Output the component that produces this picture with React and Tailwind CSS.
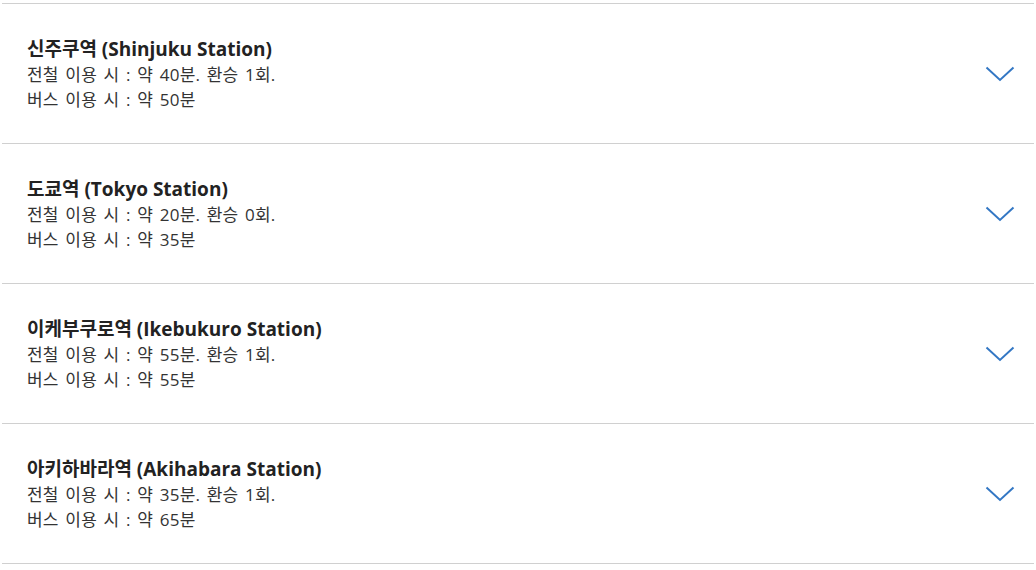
const stations = [
  { ko: '신주쿠역', en: 'Shinjuku Station', train: '약 40분. 환승 1회.', bus: '약 50분' },
  { ko: '도쿄역', en: 'Tokyo Station', train: '약 20분. 환승 0회.', bus: '약 35분' },
  { ko: '이케부쿠로역', en: 'Ikebukuro Station', train: '약 55분. 환승 1회.', bus: '약 55분' },
  { ko: '아키하바라역', en: 'Akihabara Station', train: '약 35분. 환승 1회.', bus: '약 65분' },
];

function Chevron() {
  return (
    <svg width="30" height="16" viewBox="0 0 30 16" fill="none" className="text-[#3377c4]">
      <path d="M1.5 1.5 L15 14 L28.5 1.5" stroke="currentColor" strokeWidth="2" />
    </svg>
  );
}

function StationRow({ s }) {
  return (
    <div className="flex h-[140px] items-center justify-between border-t border-[#d0d0d0] pl-[25px] pr-[19px]">
      <div className="pt-[1px]">
        <div className="text-[19px] font-bold leading-[26px] text-[#222]">
          {s.ko} ({s.en})
        </div>
        <div className="text-[17px] leading-[25px] tracking-[0.2px] text-[#333] [word-spacing:2px]">전철 이용 시 : {s.train}</div>
        <div className="text-[17px] leading-[25px] tracking-[0.2px] text-[#333] [word-spacing:2px]">버스 이용 시 : {s.bus}</div>
      </div>
      <Chevron />
    </div>
  );
}

export default function App() {
  return (
    <div
      className="min-h-[570px] bg-white px-[2px] pt-[3px]"
      style={{ fontFamily: '"Open Sans", "Noto Sans CJK KR", sans-serif' }}
    >
      <div className="border-b border-[#d0d0d0]">
        {stations.map((s) => (
          <StationRow key={s.en} s={s} />
        ))}
      </div>
    </div>
  );
}
